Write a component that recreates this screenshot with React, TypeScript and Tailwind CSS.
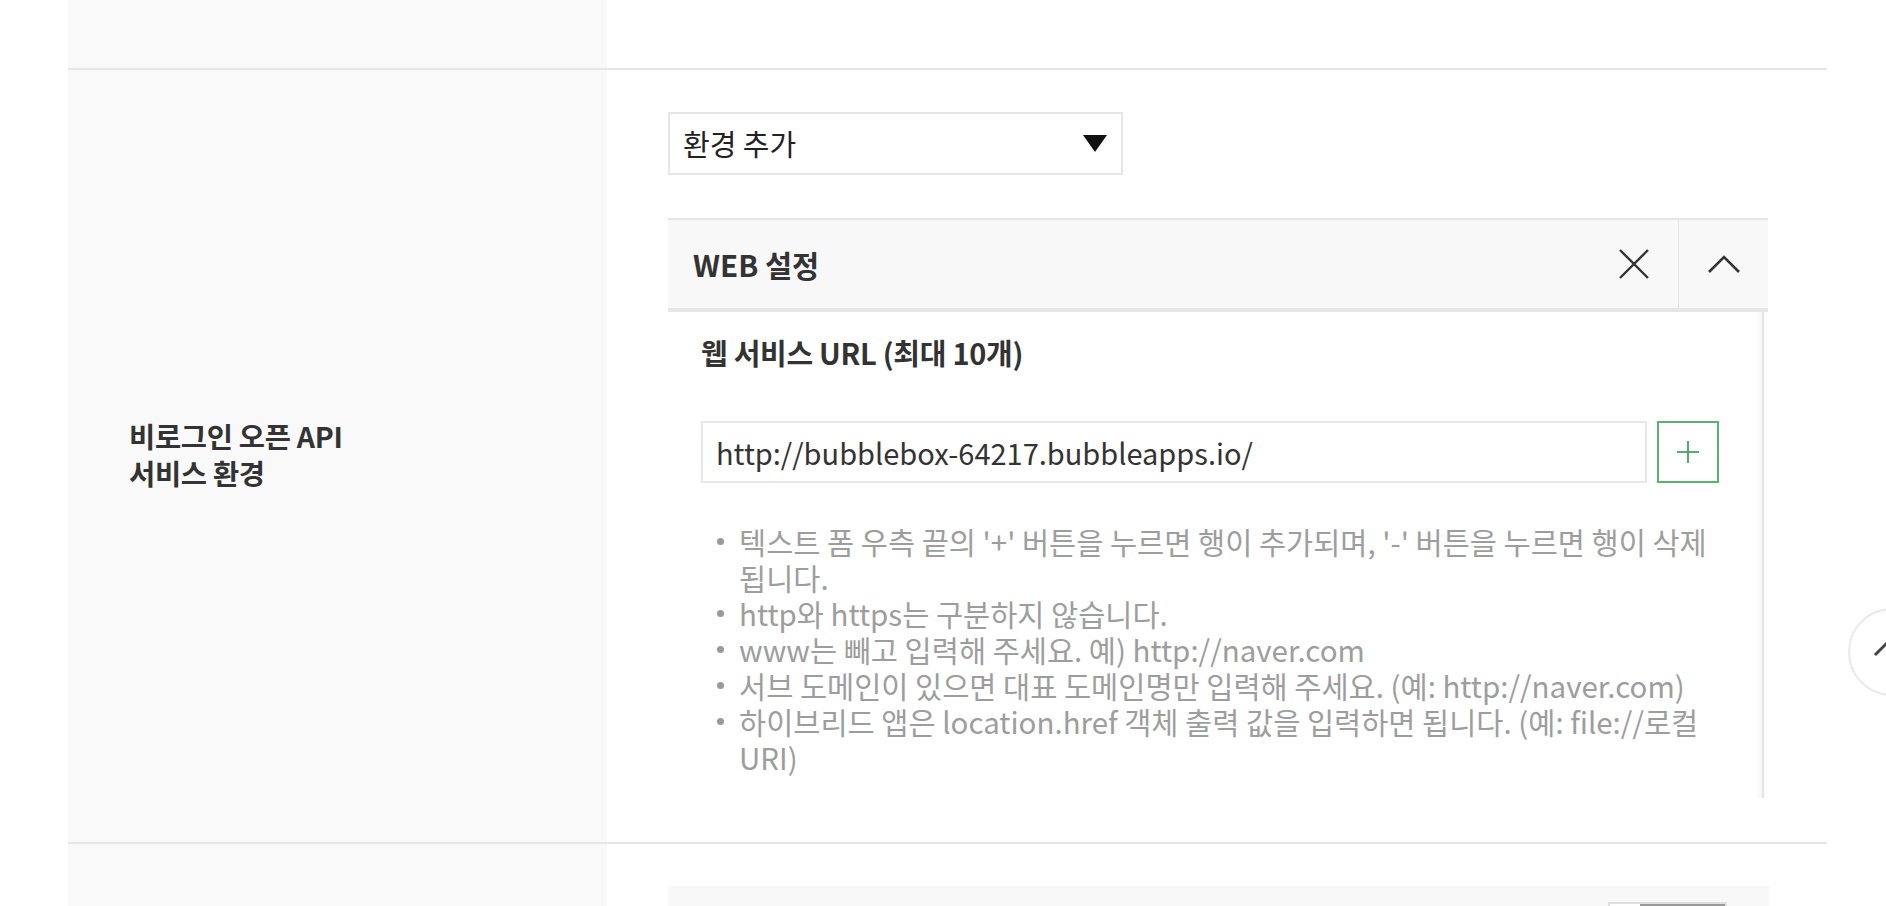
import React from "react";

const FONT = { fontFamily: '"Noto Sans CJK KR", "Noto Sans", sans-serif' };

const bullets = [
  "텍스트 폼 우측 끝의 '+' 버튼을 누르면 행이 추가되며, '-' 버튼을 누르면 행이 삭제됩니다.",
  "http와 https는 구분하지 않습니다.",
  "www는 빼고 입력해 주세요. 예) http://naver.com",
  "서브 도메인이 있으면 대표 도메인명만 입력해 주세요. (예: http://naver.com)",
  "하이브리드 앱은 location.href 객체 출력 값을 입력하면 됩니다. (예: file://로컬URI)",
];

export default function App() {
  return (
    <div className="relative h-[906px] w-[1886px] overflow-hidden bg-white" style={FONT}>
      <div className="ml-[68px] w-[1759px]">
        {/* Row 1 (partial) */}
        <div className="flex h-[70px] border-b-2 border-[#e6e6e6]">
          <div className="w-[539px] bg-[#f9f9f9]" />
          <div className="flex-1" />
        </div>

        {/* Row 2 */}
        <div className="flex border-b-2 border-[#e6e6e6]">
          <div className="flex w-[539px] items-center bg-[#f9f9f9] pl-[61px] pb-[5px]">
            <div className="text-[28.5px] font-bold leading-[37px] text-[#333] tracking-[-0.3px]">
              비로그인 오픈 API
              <br />
              서비스 환경
            </div>
          </div>
          <div className="flex-1 pl-[61px] pt-[42px] pb-[44px]">
            {/* select */}
            <div className="flex h-[63px] w-[455px] items-center justify-between border-2 border-[#e6e6e6] bg-white pl-[13px] pr-[14px]">
              <span className="text-[29px] leading-none text-[#222]">환경 추가</span>
              <svg width="24" height="17" viewBox="0 0 24 17">
                <polygon points="0,0 24,0 12,17" fill="#111" />
              </svg>
            </div>

            {/* panel header */}
            <div className="mt-[43px] flex h-[94px] w-[1100px] items-stretch border-t-2 border-b-4 border-[#e6e6e6] bg-[#f8f8f8]">
              <div className="flex flex-1 items-center pl-[25px]">
                <span className="text-[29.5px] font-bold text-[#333]">WEB 설정</span>
              </div>
              <div className="flex w-[89px] items-center justify-center">
                <svg width="30" height="30" viewBox="0 0 30 30">
                  <path d="M1 1 L29 29 M29 1 L1 29" stroke="#333" strokeWidth="2.4" fill="none" />
                </svg>
              </div>
              <div className="w-[1px] bg-[#e3e3e3]" />
              <div className="flex w-[89px] items-center justify-center">
                <svg width="32" height="18" viewBox="0 0 32 18">
                  <path d="M1 17 L16 2 L31 17" stroke="#333" strokeWidth="2.6" fill="none" />
                </svg>
              </div>
            </div>

            {/* panel body */}
            <div className="h-[486px] w-[1096px] border-r-2 border-[#e4e4e4] bg-white pl-[33px] pr-[43px] pt-[22px] shadow-[inset_-10px_0_10px_-10px_rgba(0,0,0,0.07)]">
              <div className="text-[29px] font-bold leading-[36px] text-[#333] tracking-[-0.3px]">웹 서비스 URL (최대 10개)</div>
              <div className="mt-[51px] flex gap-[10px]">
                <div className="flex h-[62px] w-[946px] items-center border-2 border-[#e8e8e8] pl-[13px]">
                  <span className="text-[29px] leading-none text-[#333]">http://bubblebox-64217.bubbleapps.io/</span>
                </div>
                <div className="flex h-[62px] w-[62px] items-center justify-center border-2 border-[#58b370] bg-white">
                  <svg width="22" height="22" viewBox="0 0 22 22">
                    <path d="M11 0 V22 M0 11 H22" stroke="#4fae67" strokeWidth="2" fill="none" />
                  </svg>
                </div>
              </div>
              <ul className="mt-[40px]">
                {bullets.map((b, i) => (
                  <li key={i} className="flex text-[29.5px] leading-[36px] text-[#9d9d9d]">
                    <span className="flex w-[38px] shrink-0 pt-[15px] pl-[16px]">
                      <span className="h-[7px] w-[7px] rounded-full bg-[#9a9a9a]" />
                    </span>
                    <span className="flex-1">{b}</span>
                  </li>
                ))}
              </ul>
            </div>
          </div>
        </div>

        {/* Row 3 (partial) */}
        <div className="flex h-[70px]">
          <div className="w-[539px] bg-[#f9f9f9]" />
          <div className="flex-1 pl-[61px] pt-[42px]">
            <div className="h-[40px] w-[1101px] bg-[#f8f8f8] pl-[940px] pt-[16px]">
              <div className="flex h-[30px] w-[119px] border-2 border-[#e0e0e0] bg-white">
                <div className="w-[30px]" />
                <div className="flex-1 bg-[#9a9a9a]" />
              </div>
            </div>
          </div>
        </div>
      </div>

      {/* scroll-top button */}
      <div className="absolute left-[1848px] top-[608px] flex h-[88px] w-[88px] items-center justify-center rounded-full border-2 border-[#e9e9e9] bg-white">
        <svg width="40" height="22" viewBox="0 0 40 22" className="-mt-[10px]">
          <path d="M3 19 L20 2 L37 19" stroke="#444" strokeWidth="3" fill="none" />
        </svg>
      </div>
    </div>
  );
}
